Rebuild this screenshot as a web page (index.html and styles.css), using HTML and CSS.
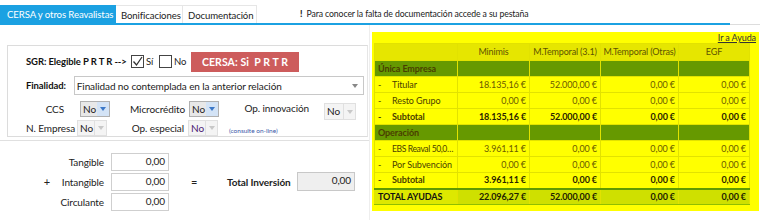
FILE: index.html
```html
<!DOCTYPE html>
<html lang="es">
<head>
<meta charset="utf-8">
<link rel="stylesheet" href="styles.css">
</head>
<body>
<div class="tabs">
  <div class="tab active">CERSA y otros Reavalistas</div>
  <div class="tab">Bonificaciones</div>
  <div class="tab">Documentación</div>
  <div class="notice"><b>!</b> Para conocer la falta de documentación accede a su pestaña</div>
</div>
<div class="tabline"><div class="blue"></div><div class="gray"></div></div>
<div class="main">
  <div class="left">
    <div class="box">
      <div class="row r1">
        <span class="lbl-b">SGR: Elegible P R T R --&gt;</span>
        <span class="chk on"><svg viewBox="0 0 13 13" width="13" height="13"><path d="M2.5 6.5 L5.5 10 L11 2" fill="none" stroke="#333" stroke-width="1.3"/></svg></span>
        <span class="chklbl">Sí</span>
        <span class="chk"></span>
        <span class="chklbl">No</span>
        <span class="btn">CERSA: Si&nbsp; P R T R</span>
      </div>
      <div class="row r2">
        <span class="lbl-b">Finalidad:</span>
        <div class="bigsel"><span>Finalidad no contemplada en la anterior relación</span><i class="tri"></i></div>
      </div>
      <div class="row r3">
        <span class="lab w1">CCS</span>
        <div class="sel act"><span>No</span><b><i class="tri blue"></i></b></div>
        <span class="lab w2">Microcrédito</span>
        <div class="sel act"><span>No</span><b><i class="tri blue"></i></b></div>
        <span class="lab w3">Op. innovación</span>
        <div class="sel dis low"><span>No</span><b><i class="tri lt"></i></b></div>
      </div>
      <div class="row r4">
        <span class="lab w4">N. Empresa</span>
        <div class="sel dis"><span>No</span><b><i class="tri lt"></i></b></div>
        <span class="lab w5">Op. especial</span>
        <div class="sel dis"><span class="purple">No</span><b><i class="tri lt"></i></b></div>
        <span class="online">(consulte on-line)</span>
      </div>
    </div>
    <div class="inv">
      <div class="invgrid">
        <span></span><span class="ilab">Tangible</span><div class="num">0,00</div>
        <span class="plus">+</span><span class="ilab">Intangible</span><div class="num">0,00</div>
        <span></span><span class="ilab">Circulante</span><div class="num">0,00</div>
      </div>
      <span class="eq">=</span>
      <span class="tot">Total Inversión</span>
      <div class="num dis">0,00</div>
    </div>
  </div>
  <div class="right">
    <div class="help"><a>Ir a Ayuda</a></div>
    <table class="ayudas">
      <colgroup><col class="c0"><col class="c1"><col class="c2"><col class="c3"><col class="c4"></colgroup>
      <tr class="head"><td></td><td>Minimis</td><td>M.Temporal (3.1)</td><td>M.Temporal (Otras)</td><td>EGF</td></tr>
      <tr class="grp"><td>Única Empresa</td><td></td><td></td><td></td><td></td></tr>
      <tr class="dat"><td><span class="dash">-</span>Titular</td><td>18.135,16 €</td><td>52.000,00 €</td><td>0,00 €</td><td>0,00 €</td></tr>
      <tr class="dat"><td><span class="dash">-</span>Resto Grupo</td><td>0,00 €</td><td>0,00 €</td><td>0,00 €</td><td>0,00 €</td></tr>
      <tr class="dat sub"><td><span class="dash">-</span>Subtotal</td><td>18.135,16 €</td><td>52.000,00 €</td><td>0,00 €</td><td>0,00 €</td></tr>
      <tr class="grp"><td>Operación</td><td></td><td></td><td></td><td></td></tr>
      <tr class="dat"><td class="trunc"><span class="dash">-</span>EBS Reaval 50,0…</td><td>3.961,11 €</td><td>0,00 €</td><td>0,00 €</td><td>0,00 €</td></tr>
      <tr class="dat"><td><span class="dash">-</span>Por Subvención</td><td>0,00 €</td><td>0,00 €</td><td>0,00 €</td><td>0,00 €</td></tr>
      <tr class="dat sub"><td><span class="dash">-</span>Subtotal</td><td>3.961,11 €</td><td>0,00 €</td><td>0,00 €</td><td>0,00 €</td></tr>
      <tr class="total"><td>TOTAL AYUDAS</td><td>22.096,27 €</td><td>52.000,00 €</td><td>0,00 €</td><td>0,00 €</td></tr>
    </table>
  </div>
</div>
</body>
</html>
```

FILE: styles.css
```css
* { box-sizing: border-box; }
html, body { margin: 0; padding: 0; background: #fff; }
body {
  width: 770px; height: 222px; overflow: hidden;
  font-family: "Lato", "Noto Sans", sans-serif;
  font-size: 9.5px; letter-spacing: -0.1px; color: #222;
}
.tabs { display: flex; align-items: flex-end; height: 23px; padding-top: 5px; }
.tab {
  height: 18px; line-height: 19px; padding: 0 5px;
  border: 1px solid #e6e6e6; border-bottom: none; border-left: none;
  color: #222; font-size: 9.6px; white-space: nowrap;
}
.tab.active { background: #1ba1e2; color: #fff; border: none; width: 116px; padding-left: 7px; }
.tab:nth-child(2) { width: 67px; }
.tab:nth-child(3) { width: 74px; }
.notice { margin-left: 43px; font-size: 8.7px; line-height: 19px; color: #222; white-space: nowrap; letter-spacing: -0.1px; }
.notice b { margin-right: 2px; font-weight: 900; }
.tabline { display: flex; align-items: flex-start; height: 2px; }
.tabline .blue { width: 730px; height: 2px; background: #1ba1e2; }
.tabline .gray { width: 30px; height: 1px; margin-top: 1px; background: #ddd; }

.main { display: flex; }
.left { width: 370px; border-right: 1px solid #eee; padding-top: 20px; }
.box {
  margin-left: 7px; width: 361px; height: 92px;
  border: 1px solid #dcdcdc; border-right-color: #e6e6e6;
  padding: 5px 0 0 18px;
}
.row { display: flex; align-items: center; white-space: nowrap; }
.lbl-b { font-weight: 700; color: #111; }
.r1 { height: 21px; }
.r1 .lbl-b { width: 105px; }
.chk { width: 13px; height: 13px; border: 1px solid #444; background: #fff; display: inline-flex; }
.chk svg { display: block; margin: -1px; }
.chklbl { margin: 0 2px 0 2px; width: 9px; }
.chklbl + .chk { margin-left: 2px; }
.chklbl:last-of-type { width: 12px; }
.btn {
  margin-left: 6px; width: 108px; height: 20px; line-height: 20px;
  background: #cd5c5c; color: #fff; font-weight: 700; font-size: 10.5px;
  text-align: center; letter-spacing: 0.1px;
}
.r2 { height: 21px; margin-top: 3px; }
.bigsel {
  margin-left: 8px; width: 290px; height: 19px;
  border: 1px solid #c8c8c8; display: flex; align-items: center; justify-content: space-between;
  padding: 0 5px 0 2px; font-size: 10px;
}
.tri { width: 0; height: 0; border-left: 3.5px solid transparent; border-right: 3.5px solid transparent; border-top: 4px solid #888; display: block; }
.tri.blue { border-top-color: #3c78c8; }
.tri.lt { border-top-color: #c8c8c8; }
.r3 { height: 20px; margin-top: 3px; }
.r4 { height: 18px; }
.lab { display: inline-block; text-align: right; font-size: 10px; }
.w1 { width: 38px; margin-right: 16px; }
.w2 { width: 75px; margin-right: 4px; }
.w3 { width: 90px; margin-right: 15px; margin-top: -3px; }
.w4 { width: 38px; margin-right: 13px; }
.w5 { width: 77px; margin-right: 4px; }
.sel {
  width: 30px; height: 16px; display: flex; align-items: stretch;
  border: 1px solid #b0b0b0; font-size: 10px;
}
.sel span { flex: 1; padding-left: 2px; line-height: 14px; }
.sel b { width: 12px; display: flex; align-items: center; justify-content: center; }
.sel.act { background: #e8e8e8; }
.sel.act b { background: #d3e3f6; }
.sel.dis { background: #f4f4f4; border-color: #e0e0e0; }
.sel.dis b { border-left: 1px solid #e0e0e0; }
.sel.low { margin-top: 5px; height: 17px; width: 32px; }
.purple { color: #4b1a72; }
.online { margin-left: 11px; font-size: 6.5px; color: #3a58a8; margin-top: 4px; letter-spacing: 0; }

.inv {
  border-top: 1px solid #e0e0e0; margin-top: 3px; height: 80px;
  display: flex; align-items: center; padding-top: 2px;
}
.invgrid {
  display: grid; grid-template-columns: 52px 52px 65px; column-gap: 0;
  row-gap: 2px; align-items: center;
}
.invgrid .num { margin-left: 7px; }
.plus { justify-self: end; padding-right: 2px; font-size: 11px; }
.ilab { text-align: right; font-size: 10px; }
.num {
  width: 58px; height: 18px; border: 1px solid #cfcfcf;
  text-align: right; padding-right: 3px; line-height: 15px; font-size: 10px;
}
.eq { margin-left: 22px; font-size: 11px; width: 36px; }
.tot { font-weight: 700; width: 70px; white-space: nowrap; font-size: 10px; }
.num.dis { background: #efefef; border-color: #c8c8c8; height: 19px; }

.right {
  margin-top: 7px; margin-left: 2px; width: 387px; height: 179px;
  background: #ffff00; padding: 0 3px 0 2px;
}
.help { height: 11px; text-align: right; font-size: 9px; line-height: 12px; }
.help a { color: #333; text-decoration: underline; }
.ayudas { border-collapse: collapse; table-layout: fixed; width: 375px; margin-top: 0; }
.c0 { width: 83px; } .c1 { width: 72px; } .c2 { width: 71px; } .c3 { width: 78px; } .c4 { width: 71px; }
.ayudas td {
  border: 1px solid #e2e200; height: 16px; padding: 0 3px 0 3px;
  white-space: nowrap; overflow: hidden; text-align: right; font-size: 9px; color: #6b5a00;
  line-height: 14px; letter-spacing: -0.1px;
}
.ayudas td:first-child { text-align: left; color: #4a3e00; padding-right: 0; }
.ayudas td.trunc { letter-spacing: -0.4px; font-size: 8.6px; }
.dash { display: inline-block; width: 14px; }
.head td { background: #e6e600; text-align: center; height: 17px; color: #5e5400; padding: 0 1px; letter-spacing: -0.15px; }
.grp td { background: #669900; color: #1b2400; font-weight: 700; }
.sub td { font-weight: 700; color: #2a2400; }
.total td { background: #cfe000; font-weight: 700; color: #1e2200; border-top: 2px solid #5f9a00; border-bottom: 1px solid #8fbf00; }
.total td:first-child { background: #dde800; color: #111; }
```
